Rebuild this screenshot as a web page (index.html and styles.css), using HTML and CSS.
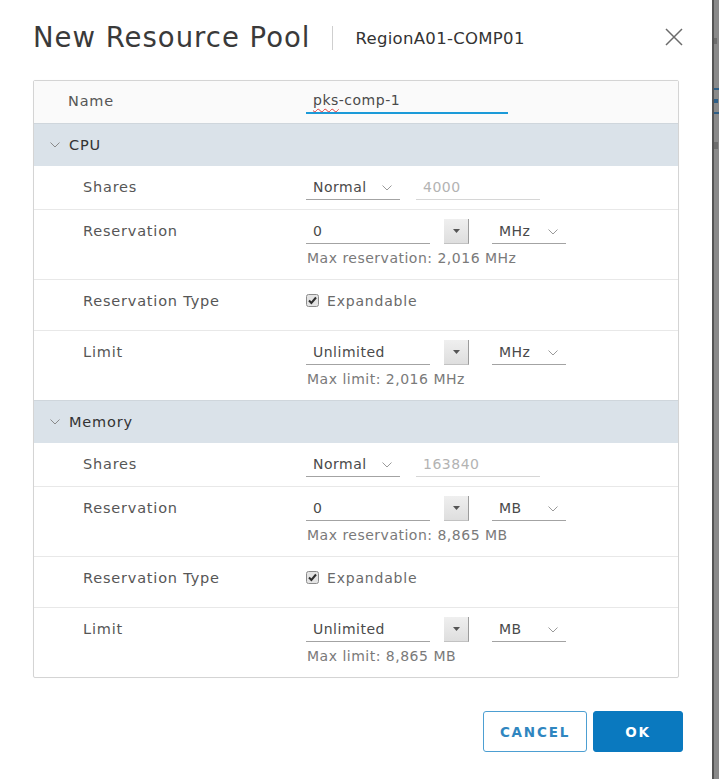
FILE: index.html
```html
<!DOCTYPE html>
<html lang="en">
<head>
<meta charset="utf-8">
<title>New Resource Pool</title>
<link rel="stylesheet" href="styles.css">
</head>
<body>
<div class="screen">
  <div class="modal">
    <div class="modal-header">
      <h1 class="title">New Resource Pool</h1>
      <span class="sep"></span>
      <span class="subtitle">RegionA01-COMP01</span>
      <button class="close" aria-label="Close">
        <svg width="18" height="18" viewBox="0 0 18 18"><path d="M1 1L17 17M17 1L1 17" stroke="#6b6b6b" stroke-width="1.5" fill="none"/></svg>
      </button>
    </div>

    <div class="form">
      <div class="row name-row">
        <div class="label">Name</div>
        <div class="value">
          <div class="field name-field"><span class="misspelled">pks</span>-comp-1</div>
        </div>
      </div>

      <div class="section-head">
        <svg class="chev" width="10" height="6" viewBox="0 0 10 6"><path d="M0.5 0.5L5 5L9.5 0.5" fill="none" stroke="#8a8a8a" stroke-width="1"/></svg>
        <span>CPU</span>
      </div>
      <div class="row">
        <div class="label sub">Shares</div>
        <div class="value">
          <div class="controls">
            <div class="select w94"><span>Normal</span><svg width="10" height="6" viewBox="0 0 10 6"><path d="M0.5 0.5L5 5L9.5 0.5" fill="none" stroke="#9a9a9a" stroke-width="1"/></svg></div>
            <div class="field disabled w124">4000</div>
          </div>
        </div>
      </div>
      <div class="row">
        <div class="label sub">Reservation</div>
        <div class="value">
          <div class="controls">
            <div class="field w124">0</div>
            <div class="spin"><svg width="7" height="4" viewBox="0 0 7 4"><path d="M0 0H7L3.5 4Z" fill="#555"/></svg></div>
            <div class="select w74"><span>MHz</span><svg width="10" height="6" viewBox="0 0 10 6"><path d="M0.5 0.5L5 5L9.5 0.5" fill="none" stroke="#9a9a9a" stroke-width="1"/></svg></div>
          </div>
          <div class="helper">Max reservation: 2,016 MHz</div>
        </div>
      </div>
      <div class="row check-row">
        <div class="label sub">Reservation Type</div>
        <div class="value">
          <label class="check">
            <svg width="13" height="13" viewBox="0 0 13 13"><rect x="0.5" y="0.5" width="12" height="12" rx="2" fill="#e4e4e4" stroke="#8c8c8c"/><path d="M3 6.5L5.4 9L10 3.5" fill="none" stroke="#2f2f2f" stroke-width="2"/></svg>
            <span>Expandable</span>
          </label>
        </div>
      </div>
      <div class="row">
        <div class="label sub">Limit</div>
        <div class="value">
          <div class="controls">
            <div class="field w124">Unlimited</div>
            <div class="spin"><svg width="7" height="4" viewBox="0 0 7 4"><path d="M0 0H7L3.5 4Z" fill="#555"/></svg></div>
            <div class="select w74"><span>MHz</span><svg width="10" height="6" viewBox="0 0 10 6"><path d="M0.5 0.5L5 5L9.5 0.5" fill="none" stroke="#9a9a9a" stroke-width="1"/></svg></div>
          </div>
          <div class="helper">Max limit: 2,016 MHz</div>
        </div>
      </div>

      <div class="section-head">
        <svg class="chev" width="10" height="6" viewBox="0 0 10 6"><path d="M0.5 0.5L5 5L9.5 0.5" fill="none" stroke="#8a8a8a" stroke-width="1"/></svg>
        <span>Memory</span>
      </div>
      <div class="row">
        <div class="label sub">Shares</div>
        <div class="value">
          <div class="controls">
            <div class="select w94"><span>Normal</span><svg width="10" height="6" viewBox="0 0 10 6"><path d="M0.5 0.5L5 5L9.5 0.5" fill="none" stroke="#9a9a9a" stroke-width="1"/></svg></div>
            <div class="field disabled w124">163840</div>
          </div>
        </div>
      </div>
      <div class="row">
        <div class="label sub">Reservation</div>
        <div class="value">
          <div class="controls">
            <div class="field w124">0</div>
            <div class="spin"><svg width="7" height="4" viewBox="0 0 7 4"><path d="M0 0H7L3.5 4Z" fill="#555"/></svg></div>
            <div class="select w74"><span>MB</span><svg width="10" height="6" viewBox="0 0 10 6"><path d="M0.5 0.5L5 5L9.5 0.5" fill="none" stroke="#9a9a9a" stroke-width="1"/></svg></div>
          </div>
          <div class="helper">Max reservation: 8,865 MB</div>
        </div>
      </div>
      <div class="row check-row">
        <div class="label sub">Reservation Type</div>
        <div class="value">
          <label class="check">
            <svg width="13" height="13" viewBox="0 0 13 13"><rect x="0.5" y="0.5" width="12" height="12" rx="2" fill="#e4e4e4" stroke="#8c8c8c"/><path d="M3 6.5L5.4 9L10 3.5" fill="none" stroke="#2f2f2f" stroke-width="2"/></svg>
            <span>Expandable</span>
          </label>
        </div>
      </div>
      <div class="row">
        <div class="label sub">Limit</div>
        <div class="value">
          <div class="controls">
            <div class="field w124">Unlimited</div>
            <div class="spin"><svg width="7" height="4" viewBox="0 0 7 4"><path d="M0 0H7L3.5 4Z" fill="#555"/></svg></div>
            <div class="select w74"><span>MB</span><svg width="10" height="6" viewBox="0 0 10 6"><path d="M0.5 0.5L5 5L9.5 0.5" fill="none" stroke="#9a9a9a" stroke-width="1"/></svg></div>
          </div>
          <div class="helper">Max limit: 8,865 MB</div>
        </div>
      </div>
    </div>

    <div class="footer">
      <button class="btn btn-outline">CANCEL</button>
      <button class="btn btn-primary">OK</button>
    </div>
  </div>
  <div class="backdrop">
    <span class="bd-mark m1"></span>
    <span class="bd-mark m2"></span>
    <span class="bd-mark m3"></span>
    <span class="bd-mark m4"></span>
    <span class="bd-mark m5"></span>
  </div>
</div>
</body>
</html>
```

FILE: styles.css
```css
* { box-sizing: border-box; }

html, body {
  margin: 0;
  padding: 0;
  background: #ffffff;
}

body {
  font-family: "DejaVu Sans", "Liberation Sans", sans-serif;
  font-size: 14px;
  letter-spacing: 0.5px;
  color: #565656;
}

.screen {
  display: flex;
  width: 719px;
  height: 779px;
  overflow: hidden;
}

.modal {
  flex: none;
  width: 712px;
  height: 779px;
  background: #ffffff;
  padding-left: 33px;
}

/* header */
.modal-header {
  display: flex;
  align-items: center;
  height: 80px;
  padding: 0 29px 6px 0;
}

.title {
  margin: 0;
  font-size: 27.5px;
  font-weight: normal;
  letter-spacing: 1px;
  color: #3a3a3a;
}

.sep {
  width: 1px;
  height: 24px;
  background: #cfcfcf;
  margin: 2px 22px 0 22px;
}

.subtitle {
  font-size: 16.5px;
  letter-spacing: 0.3px;
  color: #333333;
  padding-top: 2px;
}

.close {
  margin-left: auto;
  border: 0;
  background: none;
  padding: 0;
  width: 18px;
  height: 18px;
  display: flex;
}

/* form table */
.form {
  width: 646px;
  border: 1px solid #d4d4d4;
  border-radius: 2px;
  box-shadow: 0 0 1px rgba(0, 0, 0, 0.06);
}

.row {
  display: flex;
  padding: 9px 0;
  border-top: 1px solid #e8e8e8;
}

.section-head + .row {
  border-top: none;
}

.name-row {
  border-top: none;
  background: #fafafa;
  padding: 8px 0 9px;
}

.label {
  flex: none;
  width: 272px;
  padding-left: 34px;
  line-height: 24px;
  font-size: 14.5px;
  letter-spacing: 0.8px;
  color: #565656;
}

.label.sub {
  padding-left: 49px;
}

.value {
  flex: 1;
}

.controls {
  display: flex;
  align-items: flex-start;
}

.field {
  height: 25px;
  line-height: 24px;
  padding-left: 7px;
  border-bottom: 1px solid #a3a3a3;
  color: #4a4a4a;
}

.name-field {
  width: 202px;
  height: 25px;
  line-height: 23px;
  border-bottom: 2px solid #1b9ad8;
  color: #4a4a4a;
}

.misspelled {
  text-decoration: underline wavy #e23b3b;
  text-decoration-thickness: 1px;
  text-underline-offset: 3px;
}

.field.disabled {
  color: #b3b3b3;
  border-bottom-color: #d6d6d6;
}

.w124 { width: 124px; }
.w94 { width: 94px; }
.w74 { width: 74px; }

.select {
  height: 25px;
  display: flex;
  align-items: center;
  justify-content: space-between;
  padding: 0 8px 0 7px;
  border-bottom: 1px solid #a3a3a3;
  color: #4a4a4a;
}

.select svg { margin-top: 1px; }

.controls .select.w94 { margin-right: 16px; }

.spin {
  flex: none;
  width: 25px;
  height: 25px;
  margin: 0 23px 0 14px;
  display: flex;
  align-items: center;
  justify-content: center;
  background: linear-gradient(#efefef, #dedede);
  border-right: 1px solid #9c9c9c;
  border-bottom: 1px solid #c2c2c2;
}

.helper {
  margin-top: 2px;
  line-height: 24px;
  padding-left: 1px;
  color: #7a7a7a;
}

.check-row {
  padding-bottom: 17px;
}

.check {
  display: flex;
  align-items: center;
  gap: 8px;
  height: 24px;
  letter-spacing: 0.8px;
  color: #6a6a6a;
}

.check svg { flex: none; margin-top: -1px; }

/* collapsible section header */
.section-head {
  display: flex;
  align-items: center;
  height: 43px;
  padding-left: 16px;
  background: #dae2e9;
  border-top: 1px solid #cfd6dc;
  font-size: 14.5px;
  letter-spacing: 0.8px;
  color: #333333;
}

.section-head .chev {
  margin-right: 9px;
  margin-left: 0;
}

/* footer */
.footer {
  display: flex;
  justify-content: flex-end;
  gap: 6px;
  margin-top: 33px;
  padding-right: 29px;
}

.btn {
  height: 41px;
  border-radius: 3px;
  font-family: "DejaVu Sans", sans-serif;
  font-size: 13.5px;
  font-weight: bold;
  letter-spacing: 1.8px;
  padding: 0;
}

.btn-outline {
  width: 104px;
  background: #ffffff;
  color: #2f86c0;
  border: 1px solid #4d9fd2;
}

.btn-primary {
  width: 90px;
  background: #0a79bf;
  color: #ffffff;
  border: 1px solid #0a79bf;
}

/* dimmed page behind the dialog */
.backdrop {
  flex: 1;
  background: #8a8a8a;
  border-left: 2px solid #555555;
  display: flex;
  flex-direction: column;
}

.bd-mark {
  display: block;
  height: 2px;
  background: #6d6d6d;
}

.m1 { margin-top: 38px; width: 3px; height: 6px; }
.m2 { margin-top: 44px; background: #2f5f87; }
.m3 { margin-top: 9px; background: #2f5f87; height: 4px; width: 4px; }
.m4 { margin-top: 9px; background: #2f5f87; }
.m5 { margin-top: 28px; width: 4px; height: 7px; }
```
